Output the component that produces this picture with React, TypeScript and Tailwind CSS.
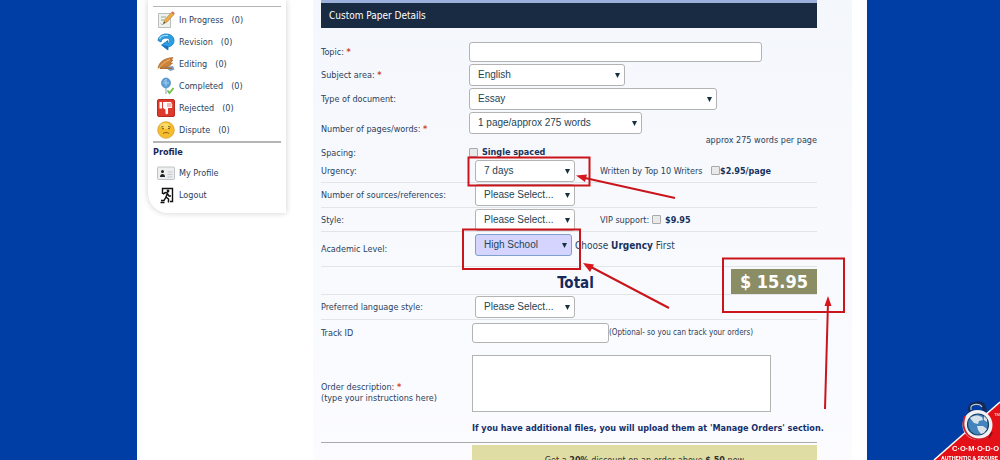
import type { ReactNode } from "react";
import clsx from "clsx";

const ProgressIcon = () => (
  <svg viewBox="0 0 18 18" className="h-[18px] w-[18px]">
    <path d="M1.500 2.500h12v14h-12z" fill="#eef1ed" stroke="#b9beb8" />
    <path d="M4 6h5M4 9h3M4 12.500l1.500 1.500 3-3.500" fill="none" stroke="#8eb08a" />
    <path d="M6.500 12.500l1-3.500 7-7.500 2.500 2-7 7.500z" fill="#f0ad45" stroke="#a8743a" strokeWidth=".6" />
    <path d="M14.500 1.500l1-1.200 2.300 2-1 1.200z" fill="#d9675b" />
    <path d="M6.500 12.500l.5-1.800 1.300 1.200z" fill="#333" />
  </svg>
);

const RevisionIcon = () => (
  <svg viewBox="0 0 18 18" className="h-[18px] w-[18px]">
    <path
      d="M1 7.500C1.500 3.500 5 1 9 1c4.500 0 8 2.500 8 6.500 0 3.500-2.500 6-6 6.500v3L4.500 12l6.500-4.500v2.800c1.200-.3 1.800-1.200 1.800-2.300C12.800 6 11 5 9 5 6 5 4.500 6.500 4 9z"
      fill="#29a0e6"
      stroke="#1670b8"
      strokeWidth=".8"
    />
    <path d="M2.500 6C4 3 7 2 11 2.500" fill="none" stroke="#9bdcfb" strokeWidth="1.300" />
    <path d="M4.500 12l6.500 5v-4z" fill="#1672be" />
  </svg>
);

const EditingIcon = () => (
  <svg viewBox="0 0 18 18" className="h-[18px] w-[18px]">
    <path d="M7 12l9-1 1.500 3.500-4 1.500z" fill="#7f9cc4" />
    <path d="M1 13C2 8 6 3 16 2.500l-2 2.500h2l-3 3h2.500c-3 4-8 4.500-12 4.500z" fill="#cf8338" stroke="#975620" strokeWidth=".6" />
    <path d="M.5 14.500C4 10 8 6.500 13 4.500" fill="none" stroke="#f3c184" strokeWidth=".8" />
    <path d="M3 12.500h12v1.500H3z" fill="#b06b29" />
  </svg>
);

const CompletedIcon = () => (
  <svg viewBox="0 0 18 18" className="h-[18px] w-[18px]">
    <ellipse cx="9" cy="6" rx="4.500" ry="5" fill="#5b9fd8" stroke="#3a78b4" strokeWidth=".6" />
    <path d="M7 4.500c.5-1.500 1.500-2 2.500-2M9 3v6M6 6h6" fill="none" stroke="#b8dcf5" strokeWidth=".8" />
    <path d="M9 11v6" stroke="#8aa2b5" />
    <path d="M10.500 13.500l2 2.500 4-5" fill="none" stroke="#6cc04a" strokeWidth="1.800" />
  </svg>
);

const RejectedIcon = () => (
  <svg viewBox="0 0 18 18" className="h-[18px] w-[18px]">
    <rect x=".5" y=".5" width="17" height="17" rx="1.500" fill="#dd3a2b" stroke="#b92a20" />
    <path d="M2.500 3H5v6.500H2.500zM6 3h7c2 0 2 1.500 1.700 2 1 .5.800 1.500.2 2 .7.700.2 2-.5 2H11v5c0 1.800-2.500 1.800-2.500 0V10.500L6 9z" fill="#fff" />
    <path d="M10 5h4.500M10 7h4.500" stroke="#dd3a2b" strokeWidth=".7" />
  </svg>
);

const DisputeIcon = () => (
  <svg viewBox="0 0 18 18" className="h-[18px] w-[18px]">
    <circle cx="9" cy="9" r="8.300" fill="#f5bd2e" stroke="#d39a22" strokeWidth=".7" />
    <ellipse cx="8" cy="5" rx="5" ry="3" fill="#fbdc6b" />
    <path d="M4 6l2.500-.6M11 5.400l2.500.6M6 12.500c1.500-1.300 4.500-1.300 6 0" fill="none" stroke="#7a5614" strokeWidth=".9" />
    <circle cx="6" cy="7.500" r=".8" fill="#5c4212" />
    <circle cx="12" cy="7.500" r=".8" fill="#5c4212" />
  </svg>
);

const ProfileIcon = () => (
  <svg viewBox="0 0 18 18" className="h-[18px] w-[18px]">
    <rect x=".5" y="3" width="17" height="12.500" rx="1" fill="#eceeef" stroke="#bfc3c5" />
    <circle cx="5.500" cy="7.500" r="1.500" fill="#222" />
    <path d="M3 13c0-2 1-3 2.500-3S8 11 8 13z" fill="#222" />
    <path d="M10.500 8h5M10.500 10.500h5M10.500 13h5" stroke="#c3c7ca" />
  </svg>
);

const LogoutIcon = () => (
  <svg viewBox="0 0 18 18" className="h-[18px] w-[18px]">
    <path d="M5.500 8V2.500h10v13H13" fill="#fff" stroke="#111" strokeWidth="1.400" />
    <circle cx="11" cy="5" r="1.400" fill="#111" />
    <path d="M6 8l2.500-1.500 2 .5-1.500 4 2.500 2v3.500M9 11l-2 3.500H4M10.500 8l1.500 2h2M3.500 16.500h4" fill="none" stroke="#111" strokeWidth="1.500" />
  </svg>
);

const orderLinks = [
  { label: "In Progress", count: 0, icon: <ProgressIcon /> },
  { label: "Revision", count: 0, icon: <RevisionIcon /> },
  { label: "Editing", count: 0, icon: <EditingIcon /> },
  { label: "Completed", count: 0, icon: <CompletedIcon /> },
  { label: "Rejected", count: 0, icon: <RejectedIcon /> },
  { label: "Dispute", count: 0, icon: <DisputeIcon /> },
];

const profileLinks = [
  { label: "My Profile", icon: <ProfileIcon /> },
  { label: "Logout", icon: <LogoutIcon /> },
];

function Sidebar() {
  return (
    <aside className="ml-[11px] w-[138px] shrink-0 self-start rounded-bl-[20px] bg-white px-[5px] pb-[7px] shadow-[0_0_6px_#cfcfcf]">
      <div className="h-[7px] border-b border-[#b5b5b5]" />
      <ul className="pt-[2px]">
        {orderLinks.map((item) => (
          <li key={item.label}>
            <a href="#" className="flex h-[22px] items-center gap-1 pl-1">
              {item.icon}
              <span>{item.label}</span>
              <span className="ml-1">({item.count})</span>
            </a>
          </li>
        ))}
      </ul>
      <h2 className="flex h-[21px] items-center border-t-2 border-[#b5b5b5] font-bold text-[#14295c]">Profile</h2>
      <ul>
        {profileLinks.map((item) => (
          <li key={item.label}>
            <a href="#" className="flex h-[22px] items-center gap-1 pl-1">
              {item.icon}
              <span>{item.label}</span>
            </a>
          </li>
        ))}
      </ul>
    </aside>
  );
}

function Select({ id, value, className, selected }: { id: string; value: string; className: string; selected?: boolean }) {
  return (
    <div className={clsx("relative shrink-0", className)}>
      <select
        id={id}
        defaultValue={value}
        className={clsx(
          "block h-[22px] w-full appearance-none rounded-[3px] border pl-2 font-['Liberation_Sans',sans-serif] text-[10px] leading-4 text-[#234456] outline-none",
          selected ? "border-[#7f9fce] bg-[#d5d4fe]" : "border-[#b3b3b3] bg-white"
        )}
      >
        <option>{value}</option>
      </select>
      <svg viewBox="0 0 5 5" className="pointer-events-none absolute top-[9px] right-[5px] h-[5px] w-[5px]">
        <path d="M0 0h5L2.500 5z" fill="#15303f" />
      </svg>
    </div>
  );
}

function Checkbox({ id }: { id: string }) {
  return (
    <input
      id={id}
      type="checkbox"
      className="h-[9px] w-[9px] shrink-0 appearance-none rounded-[1px] border border-[#a9a9a9] bg-[#e9e9e9]"
    />
  );
}

function Row({ label, id, required, className, children }: { label: string; id: string; required?: boolean; className: string; children: ReactNode }) {
  return (
    <div className={clsx("flex items-center", className)}>
      <label htmlFor={id} className="w-[148px] shrink-0 pt-px">
        {label} {required && <span className="font-bold text-[#cf4535]">*</span>}
      </label>
      {children}
    </div>
  );
}

function OrderForm() {
  return (
    <form className="ml-[27px] min-w-0 flex-1 bg-linear-to-b from-[#f4f7fc] to-[#fcfcff] pr-[35px] pl-2">
      <h1 className="flex h-[28px] items-center border-t-3 border-[#9cb0dc] bg-[#182b42] pl-2 text-[10px] text-white">
        Custom Paper Details
      </h1>

      <div className="pt-[13px]">
        <Row label="Topic:" id="topic" required className="h-[22px]">
          <input id="topic" type="text" className="h-5 w-[293px] rounded-[3px] border border-[#b3b3b3] bg-white px-2" />
        </Row>
        <Row label="Subject area:" id="subject" required className="h-6">
          <Select id="subject" value="English" className="w-[156px]" />
        </Row>
        <Row label="Type of document:" id="type" className="h-6">
          <Select id="type" value="Essay" className="w-[248px]" />
        </Row>
        <Row label="Number of pages/words:" id="pages" required className="h-[35px]">
          <div className="flex flex-1 justify-between self-stretch pt-px">
            <Select id="pages" value="1 page/approx 275 words" className="w-[173px]" />
            <span className="self-end">approx 275 words per page</span>
          </div>
        </Row>
        <Row label="Spacing:" id="single" className="h-[13px]">
          <Checkbox id="single" />
          <label htmlFor="single" className="ml-1 font-bold text-[#17325c]">Single spaced</label>
        </Row>
        <Row label="Urgency:" id="urgency" className="h-6 border-b border-[#e1e5ea]">
          <Select id="urgency" value="7 days" className="ml-[6px] w-[100px]" />
          <label htmlFor="top-writers" className="ml-[25px] w-[111px] pt-px">Written by Top 10 Writers</label>
          <Checkbox id="top-writers" />
          <b className="pt-px text-[#17325c]">$2.95/page</b>
        </Row>
        <Row label="Number of sources/references:" id="sources" className="h-[25px] border-b border-[#e1e5ea]">
          <Select id="sources" value="Please Select..." className="ml-[6px] w-[100px]" />
        </Row>
        <Row label="Style:" id="style" className="h-6 border-b border-[#e1e5ea]">
          <Select id="style" value="Please Select..." className="ml-[6px] w-[100px]" />
          <label htmlFor="vip" className="ml-[25px] w-[52px] pt-px">VIP support:</label>
          <Checkbox id="vip" />
          <b className="ml-1 pt-px text-[#17325c]">$9.95</b>
        </Row>
        <Row label="Academic Level:" id="level" className="h-[35px] border-b border-[#e1e5ea]">
          <div className="ml-[6px] flex items-center self-start pt-[2px]">
            <Select id="level" value="High School" className="w-[97px]" selected />
            <span className="ml-[3px] text-[10px]">
              Choose <b className="text-[#17325c]">Urgency</b> First
            </span>
          </div>
        </Row>
        <div className="flex h-7 items-center border-b border-[#e1e5ea] pt-[2px] text-[#14295c]">
          <div className="flex-1 pt-[3px] pl-[99px] text-center">
            <strong className="text-[15px] leading-5">Total</strong>
          </div>
          <output className="flex h-[25px] w-[86px] items-center justify-center bg-[#8b8d65] text-[18px] font-bold text-white">
            $ 15.95
          </output>
        </div>
        <Row label="Preferred language style:" id="language" className="h-[25px] border-b border-[#e1e5ea]">
          <Select id="language" value="Please Select..." className="ml-[6px] w-[100px]" />
        </Row>
        <Row label="Track ID" id="track" className="h-[25px]">
          <input id="track" type="text" className="ml-[3px] h-5 w-[137px] rounded-[3px] border border-[#b3b3b3] bg-white px-2" />
          <span className="text-[8px]">(Optional- so you can track your orders)</span>
        </Row>
        <div className="flex border-b border-[#aaaaaa] pt-[10px]">
          <label htmlFor="description" className="w-[151px] shrink-0 pt-[27px]">
            Order description: <span className="font-bold text-[#cf4535]">*</span>
            <br />
            (type your instructions here)
          </label>
          <div className="flex-1">
            <textarea id="description" className="block h-[57px] w-[299px] resize-none border border-[#b0b5b2] bg-white p-1" />
            <p className="flex h-[30px] items-center pt-[3px] font-bold whitespace-nowrap text-[#14306c]">
              If you have additional files, you will upload them at 'Manage Orders' section.
            </p>
          </div>
        </div>
        <div className="mt-[2px] ml-[151px] bg-[#e0dda4] pt-[10px] pb-4 text-center text-[#333]">
          Get a <b>20%</b> discount on an order above <b>$ 50</b> now
        </div>
      </div>
    </form>
  );
}

// red call-outs drawn over the form
function Highlights() {
  return (
    <svg viewBox="0 0 730 460" className="pointer-events-none absolute top-0 left-0 h-[460px] w-[730px]" fill="none" stroke="#c9151b" strokeWidth="2">
      <rect x="331.500" y="157.500" width="121" height="28" />
      <rect x="326" y="229.500" width="117" height="39.500" />
      <rect x="586" y="258.500" width="121" height="53.500" />
      <path d="M538 198L448 178M532 308L454 267M688 409L691 302" />
      <path d="M439 175.500L450 174.500L448 182zM446 263L457 264.500L453 272zM691 296L687.500 306h7z" fill="#d8161c" stroke="none" />
    </svg>
  );
}

function ComodoSeal() {
  return (
    <svg viewBox="0 0 80 80" className="fixed right-0 bottom-0 h-20 w-20" role="img" aria-label="Comodo authentic and secure">
      <path d="M80 22L14 80H80z" fill="#e31018" />
      <path d="M80 22L14 80" stroke="#fff" strokeWidth="1.500" />
      <path d="M51 33l-1-5c0-5 12-7 14-1l1 5" fill="none" stroke="#142a55" strokeWidth="4" />
      <path d="M51 30v-3c1-3 9-4 11 0" fill="none" stroke="#b9c6d8" strokeWidth="1.200" />
      <circle cx="57.500" cy="45" r="15" fill="#f1f1f4" />
      <path d="M45 36c-4 10 0 22 13 23.500 4 0 8-1 10-3" fill="none" stroke="#d51a25" strokeWidth="1.800" />
      <path d="M69 58l3-6" stroke="#7c1016" strokeWidth="1.500" />
      <circle cx="58" cy="44.500" r="10.500" fill="#4384bd" stroke="#183f66" strokeWidth="1.200" />
      <path d="M50 38c3-3 8-3.500 12-1l1 3-4 1-1 3-4-1zM57 46l6 0 4 3-3 4-3 1-3-4zM64 36l3 3v3l-3-2z" fill="#d6e3ea" />
      <text x="32" y="71" fill="#fff" fontFamily="Liberation Sans, sans-serif" fontSize="7.500" fontWeight="bold">C·O·M·O·D·O</text>
      <text x="21" y="79.500" fill="#fff" fontFamily="Roboto, sans-serif" fontSize="5.500" fontWeight="bold">AUTHENTIC &amp; SECURE</text>
      <text x="74" y="36" fill="#fff" fontFamily="Liberation Sans, sans-serif" fontSize="4">TM</text>
    </svg>
  );
}

export default function App() {
  return (
    <div className="h-screen overflow-hidden bg-[#003da5] pl-1 font-['DejaVu_Sans_Condensed','DejaVu_Sans',sans-serif] text-[9px] leading-[11px] text-[#2b3f5c]">
      <div className="relative mx-auto flex min-h-full max-w-[730px] bg-white pr-[15px]">
        <Sidebar />
        <OrderForm />
        <Highlights />
      </div>
      <ComodoSeal />
    </div>
  );
}
